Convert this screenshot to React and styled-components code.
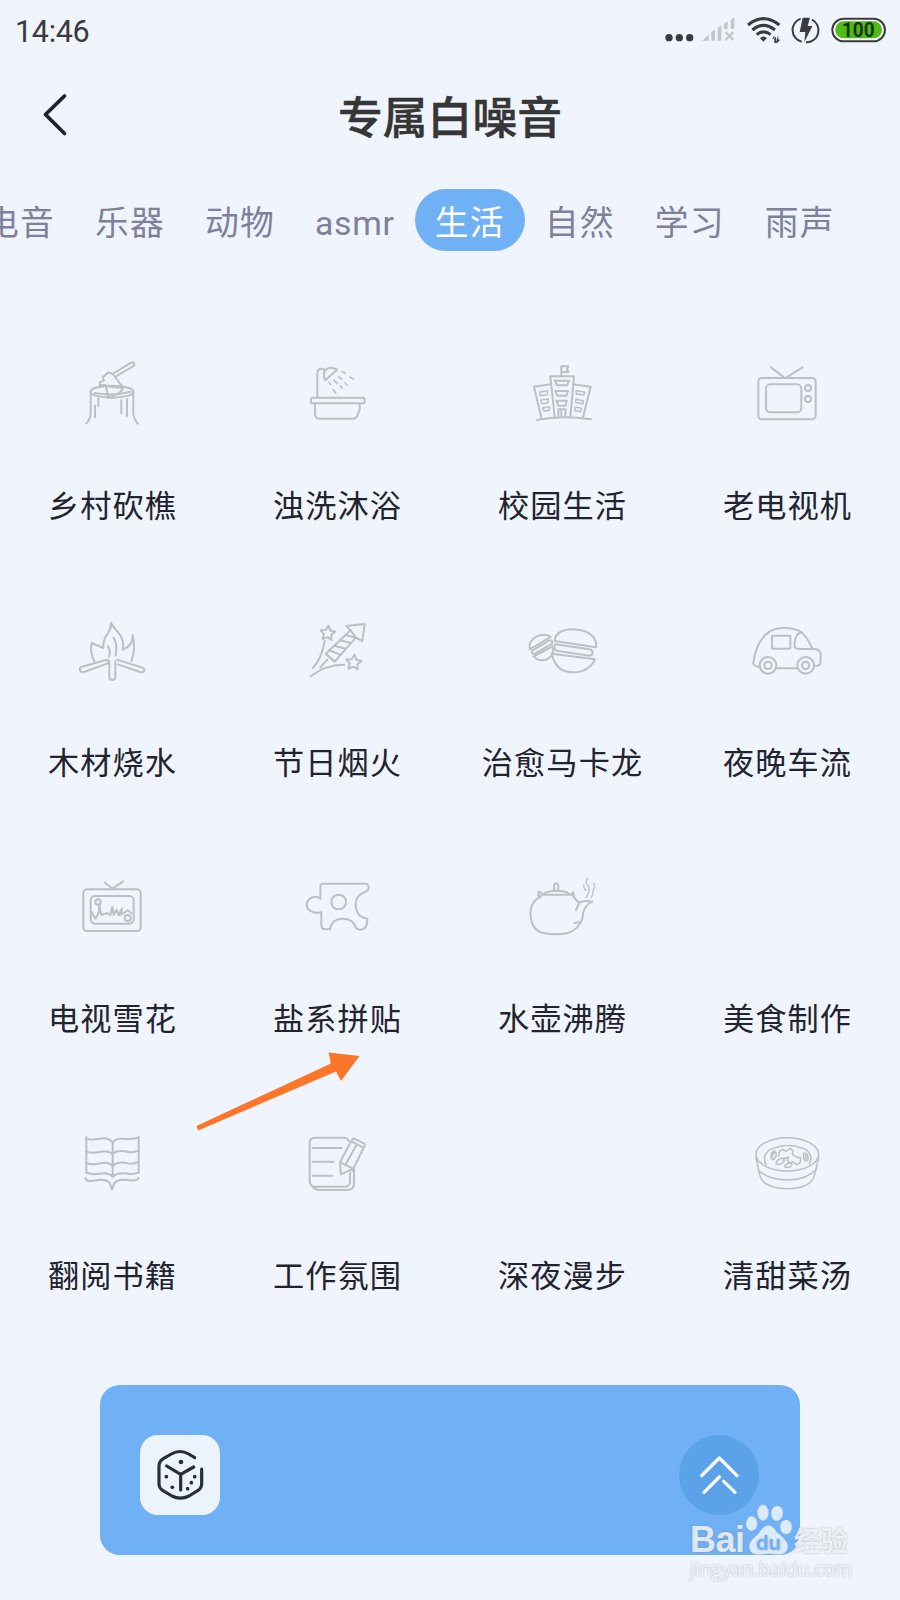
import styled, { createGlobalStyle } from "styled-components";

const tabs = ["电音", "乐器", "动物", "asmr", "生活", "自然", "学习", "雨声"];

const star = (x, y, r) =>
  Array.from({ length: 10 }, (_, i) => {
    const a = -Math.PI / 2 + 0.1 + (i * Math.PI) / 5;
    const d = i % 2 ? r * 0.5 : r;
    return `${x + d * Math.cos(a)},${y + d * Math.sin(a)}`;
  }).join(" ");

// Every drawing is 270 units wide, shown at 90px
const StumpIcon = () => (
  <Icon viewBox="24 31 270 270">
    <path d="M92 156V220Q92 238 79 251M220 156V220Q221 240 234 252" />
    <ellipse cx="156" cy="156" rx="65" ry="18" />
    <path d="M104 160Q156 170 212 156M105 198V233M115 176V200M184 182V220M201 178V230" />
    <path d="M158 103L213 69Q219 65 222 71Q225 76 219 80L165 112L189 143Q186 162 144 174Q141 155 137 136L120 137L119 128L132 122L128 113L137 105L145 98L158 103L165 112" />
    <path d="M139 140L188 145" />
  </Icon>
);

const BathIcon = () => (
  <Icon viewBox="699 31 270 270">
    <rect x="753" y="174" width="161" height="17" rx="5" />
    <path d="M765 192V222Q765 237 780 237H878Q890 237 893 226L899 210V192M772 173V101Q772 86 786 87L794 91" />
    <path d="M796 122Q786 99 799 89Q814 79 831 90Z" />
    <path
      strokeWidth="5"
      d="M807 128L812 135M820 150L827 160M822 122L832 131M841 139L846 146M836 111L846 119M855 130L861 136M846 96L855 101M870 112L880 118"
    />
  </Icon>
);

const SchoolIcon = () => (
  <Icon viewBox="54 31 270 270">
    <path d="M110 241Q185 226 273 239M164 232L151 110H222L211 232M153 134L102 141L124 234M219 134L272 141L249 233M184 109V80H205L201 88L205 97H186" />
    <path d="M164 123H207L201 137H171ZM166 154H204L199 168H172ZM169 183H200L197 198H175ZM175 229V209H197L196 229M184 212V230" />
    <path
      strokeWidth="4.5"
      d="M120 157L143 153L141 165L119 168ZM122 181L145 178L144 189L125 192ZM128 204L148 202L148 212L132 214ZM228 153L254 157L252 166L229 163ZM228 178L250 184L248 193L227 188ZM226 202L244 206L242 216L225 213Z"
    />
  </Icon>
);

const TvIcon = () => (
  <Icon viewBox="729 31 270 270">
    <rect x="775" y="115" width="172" height="124" rx="11" />
    <rect x="798" y="134" width="106" height="84" rx="13" />
    <circle cx="924" cy="145" r="9" />
    <circle cx="924" cy="178" r="9" />
    <path d="M813 83L851 112M908 83L861 112" />
  </Icon>
);

const FireIcon = () => (
  <Icon viewBox="24 21 270 270">
    <path d="M103 184Q89 158 95 129L130 144Q128 120 144 99Q154 85 153 69Q163 85 176 99Q194 120 188 149Q220 137 218 105Q228 148 214 184" />
    <path d="M144 139Q153 151 147 171M161 113Q173 132 167 166" />
    <path d="M66 200L137 180Q144 178 146 184Q147 189 141 191L72 216Q63 218 60 211Q58 203 66 200ZM171 179L247 203Q255 206 252 213Q249 218 240 216L174 193M148 184V232Q149 240 157 240Q165 240 166 232V184" />
  </Icon>
);

const RocketIcon = () => (
  <Icon viewBox="699 21 270 270">
    <path d="M859 78L914 72L907 123L887 113L824 185L797 161L872 91Z" />
    <path d="M872 91L887 113M856 105L889 113M839 121L872 128M823 137L857 146M808 151L840 164M799 163L822 183" />
    <polygon points={star(803, 100, 23)} />
    <polygon points={star(881, 188, 24)} />
    <path d="M794 123Q785 175 759 204M802 179L781 202M752 229Q797 193 853 194" />
  </Icon>
);

const MacaronIcon = () => (
  <Icon viewBox="54 21 270 270">
    <path d="M164 123Q166 91 214 88Q276 88 289 129L288 142Z" />
    <path d="M165 133Q160 151 174 153L267 167Q278 167 278 157Q277 149 268 148Z" />
    <path d="M155 161L285 178Q266 217 218 217Q167 216 155 161Z" />
    <path d="M89 148Q84 124 110 109Q137 98 152 111Z" />
    <path d="M98 151L147 122Q156 119 157 126Q158 131 153 133L106 160Q98 164 96 158Q94 154 98 151Z" />
    <path d="M101 169L158 139L160 152Q155 176 134 180Q115 184 101 169Z" />
  </Icon>
);

const CarIcon = () => (
  <Icon viewBox="729 21 270 270">
    <path d="M779 202L765 197Q759 195 760 188Q768 123 809 94Q850 73 897 92Q918 103 937 146Q964 146 962 168L961 191Q960 198 944 198M831 205H892" />
    <rect x="816" y="107" width="55" height="39" rx="3" />
    <path d="M937 147H894Q882 145 883 134Q885 102 903 97" />
    <circle cx="804" cy="196" r="25" />
    <circle cx="804" cy="196" r="11" />
    <circle cx="917" cy="196" r="25" />
    <circle cx="917" cy="196" r="11" />
  </Icon>
);

const SnowTvIcon = () => (
  <Icon viewBox="24 11 270 270">
    <rect x="70" y="90" width="172" height="125" rx="11" />
    <rect x="92" y="110" width="129" height="83" rx="13" />
    <path d="M135 70L158 88L189 66" />
    <circle cx="114" cy="128" r="8" />
    <circle cx="203" cy="176" r="9" />
    <path d="M96 160L106 178L117 159L118 137L124 167L142 161L151 168L157 142L161 166L170 151L176 167L186 147L181 167L203 153L214 162" />
  </Icon>
);

const PuzzleIcon = () => (
  <Icon viewBox="699 11 270 270">
    <path d="M781 118V81Q781 73 790 73H914Q926 73 926 85Q927 94 910 100Q887 111 887 135Q888 174 922 178Q922 211 900 211Q890 211 886 202Q878 177 846 178Q814 180 810 210H796Q784 210 784 198V158Q772 163 759 158Q740 151 740 137Q741 118 760 113Q770 110 781 118Z" />
    <circle cx="836" cy="128" r="22" />
  </Icon>
);

const KettleIcon = () => (
  <Icon viewBox="54 11 270 270">
    <path d="M123 111Q91 127 91 163Q94 214 130 221Q166 229 207 220Q235 210 247 179Q249 137 277 127Q248 122 237 131L218 109M237 131L228 152M223 191L243 188" />
    <path d="M115 98H121L127 106H215L219 98M115 98V110L123 111M219 98L222 108M132 103Q141 95 168 94Q197 94 207 103M162 93V79Q163 72 168 72Q175 73 175 80V93" />
    <path strokeWidth="4" d="M263 57Q254 69 263 78Q273 91 263 104L260 115M251 78Q252 90 258 93M281 72Q288 83 280 91Q280 104 274 115" />
  </Icon>
);

const BookIcon = () => (
  <Icon viewBox="24 31 270 270">
    <path d="M79 82V189M236 82V189M158 99V201" />
    <path d="M79 86Q92 92 119 87Q145 82 158 99Q165 86 185 87Q216 91 236 83M79 126Q94 132 119 127Q143 120 158 133Q170 121 194 125Q217 131 236 123M79 160Q95 167 121 161Q145 155 158 169Q169 157 193 159Q216 166 236 157M79 189Q95 196 119 192Q145 188 158 201Q172 189 194 191Q217 196 236 189" />
    <path d="M76 206Q80 218 107 212Q137 207 149 220L156 240L163 220Q175 207 203 211Q232 216 235 205" />
  </Icon>
);

const NoteIcon = () => (
  <Icon viewBox="699 31 270 270">
    <path d="M866 94Q863 84 851 84H766Q749 84 749 100V216Q750 231 765 231H851Q870 231 870 216V190M758 231Q765 241 780 241H861Q882 240 882 222V178L876 183" />
    <path d="M758 115H845M758 156H820M758 198H816" />
    <path d="M883 87L913 102Q917 106 909 118L880 177L843 194L840 158L875 92Q879 85 883 87ZM874 95L908 113M840 158L880 177M890 105L856 165" />
  </Icon>
);

const SoupIcon = () => (
  <Icon viewBox="69 31 270 270">
    <g strokeWidth="4.5">
      <ellipse cx="202" cy="134" rx="94" ry="50" />
      <path d="M108 143L120 199Q132 236 205 237Q270 236 283 199L296 143M114 180Q142 210 205 211Q263 209 290 177" />
      <path d="M138 165Q124 136 151 120Q204 95 257 120Q281 136 268 163" />
      <path d="M154 148Q149 132 162 124Q171 127 168 139Q165 151 154 148ZM251 131Q261 128 264 141Q265 154 257 154Q248 147 251 131ZM158 142Q157 133 163 129M256 137Q260 141 258 148" />
      <path d="M176 140L178 126L188 119L197 125L212 116L219 125L217 134L229 142L242 145L240 160L229 165L218 156L207 160L202 150L206 142L194 146L190 152" />
      <path d="M190 145Q198 151 187 160Q175 168 168 162Q169 148 190 145ZM214 160Q219 167 208 173Q193 176 195 168Q201 159 214 160Z" />
    </g>
  </Icon>
);

const sounds = [
  { name: "乡村砍樵", icon: StumpIcon },
  { name: "浊洗沐浴", icon: BathIcon },
  { name: "校园生活", icon: SchoolIcon },
  { name: "老电视机", icon: TvIcon },
  { name: "木材烧水", icon: FireIcon },
  { name: "节日烟火", icon: RocketIcon },
  { name: "治愈马卡龙", icon: MacaronIcon },
  { name: "夜晚车流", icon: CarIcon },
  { name: "电视雪花", icon: SnowTvIcon },
  { name: "盐系拼贴", icon: PuzzleIcon },
  { name: "水壶沸腾", icon: KettleIcon },
  { name: "美食制作" },
  { name: "翻阅书籍", icon: BookIcon },
  { name: "工作氛围", icon: NoteIcon },
  { name: "深夜漫步" },
  { name: "清甜菜汤", icon: SoupIcon },
];

const StatusIcons = () => (
  <StatusSvg viewBox="640 40 680 100">
    <g fill="#3b3b40">
      <circle cx="658" cy="114" r="11" />
      <circle cx="689" cy="114" r="11" />
      <circle cx="720" cy="114" r="11" />
    </g>
    <g fill="#c3c5cb">
      <path d="M758 123L777 104V123ZM785 97L796 90V123H785ZM804 84L815 77V123H804ZM823 72L834 65V88H823ZM843 61L854 53V88H843Z" />
      <path stroke="#c3c5cb" strokeWidth="7" d="M827 97L851 121M851 97L827 121" />
    </g>
    <g fill="none" stroke="#3b3b40" strokeWidth="9">
      <path d="M895 76Q941 38 989 76M908 91Q941 63 976 91M921 105Q941 88 963 105" />
      <path strokeWidth="6" d="M1053 57A36 36 0 0 0 1056 126M1087 60A36 36 0 0 1 1069 128" />
    </g>
    <path fill="#3b3b40" d="M931 115Q941 106 952 115L941 126ZM967 119L974 107V130H979V112M984 107V130H979M986 107V120H992L982 130Z" />
    <path fill="#3b3b40" d="M1059 54H1081L1074 79H1088L1064 128L1067 97H1050Z" />
    <rect x="1148" y="57" width="158" height="68" rx="34" fill="#f6fbf6" stroke="#3b3b40" strokeWidth="6" />
    <rect x="1157" y="65" width="140" height="51" rx="25" fill="#4fba18" />
    <text x="1226" y="112" textAnchor="middle" fontFamily="Roboto, sans-serif" fontWeight="700" fontSize="62" textLength="98" lengthAdjust="spacingAndGlyphs" fill="#173512">
      100
    </text>
  </StatusSvg>
);

const Paw = () => (
  <PawSvg viewBox="375 398 145 160">
    <g fill="#fff" fillOpacity="0.75" stroke="#9dbada" strokeOpacity="0.55" strokeWidth="3">
      <ellipse cx="395" cy="460" rx="17" ry="22" />
      <ellipse cx="429" cy="427" rx="17" ry="24" />
      <ellipse cx="471" cy="429" rx="18" ry="23" transform="rotate(8 471 429)" />
      <ellipse cx="498" cy="470" rx="18" ry="22" />
      <path d="M445 465Q459 465 470 485Q506 512 504 530Q501 553 475 553Q445 547 420 553Q391 555 387 530Q388 510 416 490Q429 466 445 465Z" />
    </g>
    <text x="445" y="538" textAnchor="middle" fontFamily="Inter, sans-serif" fontWeight="600" fontSize="60" fill="#70b0f4">
      du
    </text>
  </PawSvg>
);

const App = () => {
  return (
    <Screen>
      <GlobalStyle />
      <StatusBar>
        <Clock>14:46</Clock>
        <StatusIcons />
      </StatusBar>

      <Header>
        <BackButton aria-label="back">
          <svg width="26" height="46" viewBox="0 0 26 46">
            <path d="M22.5 4L3.5 22.5L22.5 41.5" />
          </svg>
        </BackButton>
        <Title>专属白噪音</Title>
      </Header>

      <Tabs>
        {tabs.map((tab) => (
          <Tab key={tab} $active={tab === "生活"} $latin={tab === "asmr"}>
            {tab}
          </Tab>
        ))}
      </Tabs>

      <Grid>
        {sounds.map(({ name, icon: SoundIcon }) => (
          <Sound key={name}>
            <IconBox>{SoundIcon && <SoundIcon />}</IconBox>
            <Label>{name}</Label>
          </Sound>
        ))}
      </Grid>

      <Player>
        <DiceButton aria-label="random">
          <svg width="80" height="80" viewBox="180 195 240 240">
            <path d="M344 263L326 252Q300 237 274 252L250 266Q237 274 237 288V342Q237 354 249 362L276 378Q300 391 327 378L353 362Q365 354 365 342V297" />
            <path d="M260 288L302 313L341 291M302 313V360" />
            <g className="dots">
              <circle cx="303" cy="276" r="7" />
              <circle cx="259" cy="320" r="5.5" />
              <circle cx="277" cy="352" r="5.5" />
              <circle cx="344" cy="320" r="5.5" />
              <circle cx="334" cy="338" r="5.5" />
              <circle cx="323" cy="356" r="5.5" />
            </g>
          </svg>
        </DiceButton>
        <ExpandButton aria-label="expand">
          <svg width="80" height="80" viewBox="178 195 240 240">
            <path d="M246 317L299 264L352 317M253 367L299 321M312 334L346 367" />
          </svg>
        </ExpandButton>
      </Player>

      <Arrow viewBox="190 1045 175 90">
        <path d="M196.500 1126L331 1063.500L328.500 1052.500L359.500 1056L341 1081L336 1071.500L198 1130.500Z" />
      </Arrow>

      <Watermark>
        <Brand>
          <Bai>Bai</Bai>
          <Paw />
          <Jingyan>经验</Jingyan>
        </Brand>
        <Site>jingyan.baidu.com</Site>
      </Watermark>
    </Screen>
  );
};

export default App;

const GlobalStyle = createGlobalStyle`
  * {
    box-sizing: border-box;
  }

  body {
    margin: 0;
    background: #f0f4fd;
    font-family: Roboto, "Noto Sans CJK SC", sans-serif;
  }

  button {
    padding: 0;
    border: 0;
    background: none;
  }
`;

const Screen = styled.main`
  position: relative;
  display: flex;
  flex-direction: column;
  width: 900px;
  height: 1600px;
  overflow: hidden;
  background: #f0f4fc;
`;

const StatusBar = styled.div`
  display: flex;
  justify-content: space-between;
  align-items: center;
  height: 60px;
  padding: 0 10px 0 15px;
`;

const Clock = styled.span`
  font-size: 30.500px;
  letter-spacing: -0.300px;
  line-height: 60px;
  padding-top: 3px;
  color: #3b3b40;
`;

const StatusSvg = styled.svg`
  width: 226.670px;
  height: 33.330px;
`;

const Header = styled.header`
  display: grid;
  grid-template-columns: 100px 1fr 100px;
  align-items: center;
  height: 112px;
  border-bottom: 2px solid #f1f4f9;
`;

const BackButton = styled.button`
  display: flex;
  justify-content: center;
  padding-left: 10px;

  path {
    fill: none;
    stroke: #20222f;
    stroke-width: 3.8;
    stroke-linecap: round;
    stroke-linejoin: round;
  }
`;

const Title = styled.h1`
  margin: 0;
  padding-top: 8px;
  text-align: center;
  font-size: 44.800px;
  font-weight: 500;
  line-height: 60px;
  color: #363636;
  -webkit-text-stroke: 0.5px #363636;
`;

const Tabs = styled.nav`
  display: flex;
  flex-shrink: 0;
  margin: 17px 0 0 -35px;
`;

const Tab = styled.button`
  flex-shrink: 0;
  height: 62px;
  padding: 7px 20px 0;
  border-radius: 31px;
  font-family: inherit;
  font-size: 33.800px;
  letter-spacing: ${(props) => (props.$latin ? "0.7px" : "1.2px")};
  line-height: 55px;
  color: ${(props) => (props.$active ? "#fff" : "#7e809c")};
  background: ${(props) => (props.$active ? "#70b0f4" : "transparent")};
`;

const Grid = styled.section`
  display: grid;
  grid-template-columns: repeat(4, 225px);
  grid-auto-rows: 256.670px;
  margin-top: 99px;
`;

const Sound = styled.div`
  display: flex;
  flex-direction: column;
  align-items: center;
  gap: 44px;
`;

const IconBox = styled.div`
  width: 90px;
  height: 90px;
`;

const Icon = styled.svg`
  display: block;
  width: 90px;
  height: 90px;
  fill: none;
  stroke: #bdbfc2;
  stroke-width: 6;
  stroke-linecap: round;
  stroke-linejoin: round;
`;

const Label = styled.span`
  font-size: 31.200px;
  letter-spacing: 1.100px;
  line-height: 46px;
  white-space: nowrap;
  color: #22232f;
`;

const Player = styled.section`
  display: flex;
  justify-content: space-between;
  align-items: center;
  width: 700px;
  height: 170px;
  margin: 8px auto 0;
  padding: 10px 41px 0 40px;
  border-radius: 20px;
  background: #70b0f4;
`;

const RoundButton = styled.button`
  width: 80px;
  height: 80px;

  svg {
    display: block;
    fill: none;
    stroke-linecap: round;
    stroke-linejoin: round;
  }
`;

const DiceButton = styled(RoundButton)`
  border-radius: 18px;
  background: #ebf3fc;

  svg {
    stroke: #2a2c38;
    stroke-width: 9.500;
  }

  .dots {
    fill: #2a2c38;
    stroke: none;
  }
`;

const ExpandButton = styled(RoundButton)`
  border-radius: 50%;
  background: #5ba2e9;

  svg {
    stroke: #fff;
    stroke-width: 10;
  }
`;

const Arrow = styled.svg`
  position: absolute;
  left: 190px;
  top: 1045px;
  width: 175px;
  height: 90px;
  fill: #fb7629;
`;

const Watermark = styled.div`
  position: absolute;
  left: 690px;
  top: 1502px;
  width: 164px;
  color: rgba(255, 255, 255, 0.8);
  text-shadow: 0 0 2px rgba(110, 125, 150, 0.6);
`;

const Brand = styled.div`
  display: flex;
  align-items: flex-end;
  height: 54px;
`;

const Bai = styled.span`
  width: 54.500px;
  font-family: "Liberation Sans", sans-serif;
  font-size: 36px;
  font-weight: 700;
  letter-spacing: -0.500px;
  line-height: 36px;
  height: 34px;
`;

const PawSvg = styled.svg`
  width: 48.330px;
  height: 53.330px;
`;

const Jingyan = styled.span`
  margin-left: 1px;
  font-size: 27px;
  font-weight: 700;
  line-height: 32px;
  height: 30px;
`;

const Site = styled.div`
  font-family: "Open Sans", sans-serif;
  font-size: 19.100px;
  line-height: 26px;
  white-space: nowrap;
`;
